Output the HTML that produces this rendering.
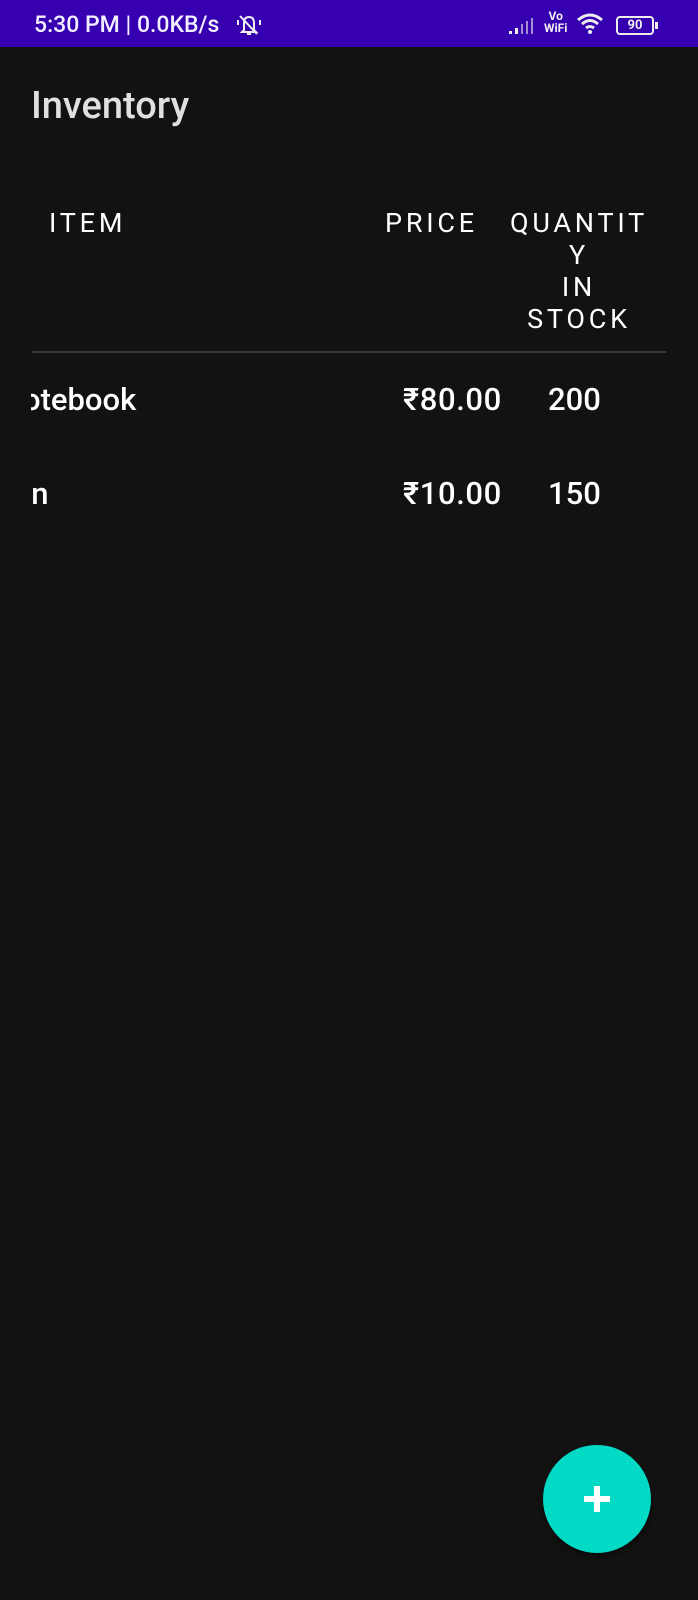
<!DOCTYPE html>
<html><head><meta charset="utf-8"><style>
*{margin:0;padding:0;box-sizing:border-box}
body{width:698px;height:1600px;background:#121212;position:relative;overflow:hidden;font-family:"Roboto","Liberation Sans","DejaVu Sans",sans-serif;color:#fff}
.sb{position:absolute;left:0;top:0;width:698px;height:47px;background:#3600b0}
.abs{position:absolute;white-space:nowrap}
.h{font-size:27px;line-height:32px;letter-spacing:3.8px;color:#fff}
.r{font-size:31px;line-height:36px;color:#fff;font-weight:500}
</style></head><body>
<div class="sb"></div>
<div class="abs" style="left:34px;top:12px;font-size:23px;line-height:26px;color:#f2efff;font-weight:500">5:30 PM | 0.0KB/s</div>
<svg class="abs" style="left:236px;top:13px" width="26" height="24" viewBox="0 0 26 24" fill="none" stroke="#eee" stroke-width="2">
<path d="M8 17 L8 10 Q8 4 13 4 Q18 4 18 10 L18 17 L20 19 L6 19 Z"/><path d="M11 21 h4"/><path d="M4 3 L21 21"/><path d="M2 7 v5 M24 7 v5"/></svg>
<svg class="abs" style="left:508px;top:18px" width="30" height="18" viewBox="0 0 30 18" fill="#eee">
<rect x="1" y="13" width="3" height="3"/><rect x="7" y="10" width="3" height="6"/><rect x="13" y="6" width="2" height="10" opacity=".6"/><rect x="18" y="3" width="2" height="13" opacity=".6"/><rect x="23" y="0" width="2" height="16" opacity=".6"/></svg>
<div class="abs" style="left:544px;top:10px;font-size:12px;line-height:12px;color:#eee;font-weight:bold;text-align:center">Vo<br>WiFi</div>
<svg class="abs" style="left:576px;top:12px" width="28" height="24" viewBox="0 0 28 24" fill="none" stroke="#eee" stroke-width="3">
<path d="M2 8 Q14 -2 26 8"/><path d="M6 12 Q14 5 22 12"/><path d="M10 16 Q14 13 18 16"/><circle cx="14" cy="20" r="2" fill="#eee" stroke="none"/></svg>
<div class="abs" style="left:616px;top:16px;width:38px;height:19px;border:2px solid #eee;border-radius:4px;font-size:13px;line-height:15px;text-align:center;color:#eee;font-weight:bold">90</div>
<div class="abs" style="left:655px;top:22px;width:3px;height:7px;background:#eee"></div>
<div class="abs" style="left:31px;top:84px;font-size:38px;line-height:44px;color:#e0e0e0;font-weight:500">Inventory</div>
<div class="abs h" style="left:49px;top:207px">ITEM</div>
<div class="abs h" style="left:385px;top:207px">PRICE</div>
<div class="abs h" style="left:503px;top:207px;width:152px;text-align:center">QUANTIT<br>Y<br>IN<br>STOCK</div>
<div class="abs" style="left:32px;top:351px;width:634px;height:2px;background:#3a3a3a"></div>
<div class="abs" style="left:31px;top:382px;width:300px;height:40px;overflow:hidden"><div class="abs r" style="left:-30px;top:0">Notebook</div></div>
<div class="abs r" style="left:403px;top:382px;letter-spacing:0.6px">₹80.00</div>
<div class="abs r" style="left:548px;top:382px">200</div>
<div class="abs" style="left:31px;top:476px;width:300px;height:40px;overflow:hidden"><div class="abs r" style="left:-36px;top:0">Pen</div></div>
<div class="abs r" style="left:403px;top:476px;letter-spacing:0.6px">₹10.00</div>
<div class="abs r" style="left:548px;top:476px">150</div>
<div class="abs" style="left:543px;top:1445px;width:108px;height:108px;border-radius:50%;background:#03dac5;box-shadow:0 3px 6px rgba(0,0,0,.5)"></div>
<div class="abs" style="left:584px;top:1496px;width:26px;height:6px;background:#fff"></div>
<div class="abs" style="left:594px;top:1486px;width:6px;height:26px;background:#fff"></div>
</body></html>
